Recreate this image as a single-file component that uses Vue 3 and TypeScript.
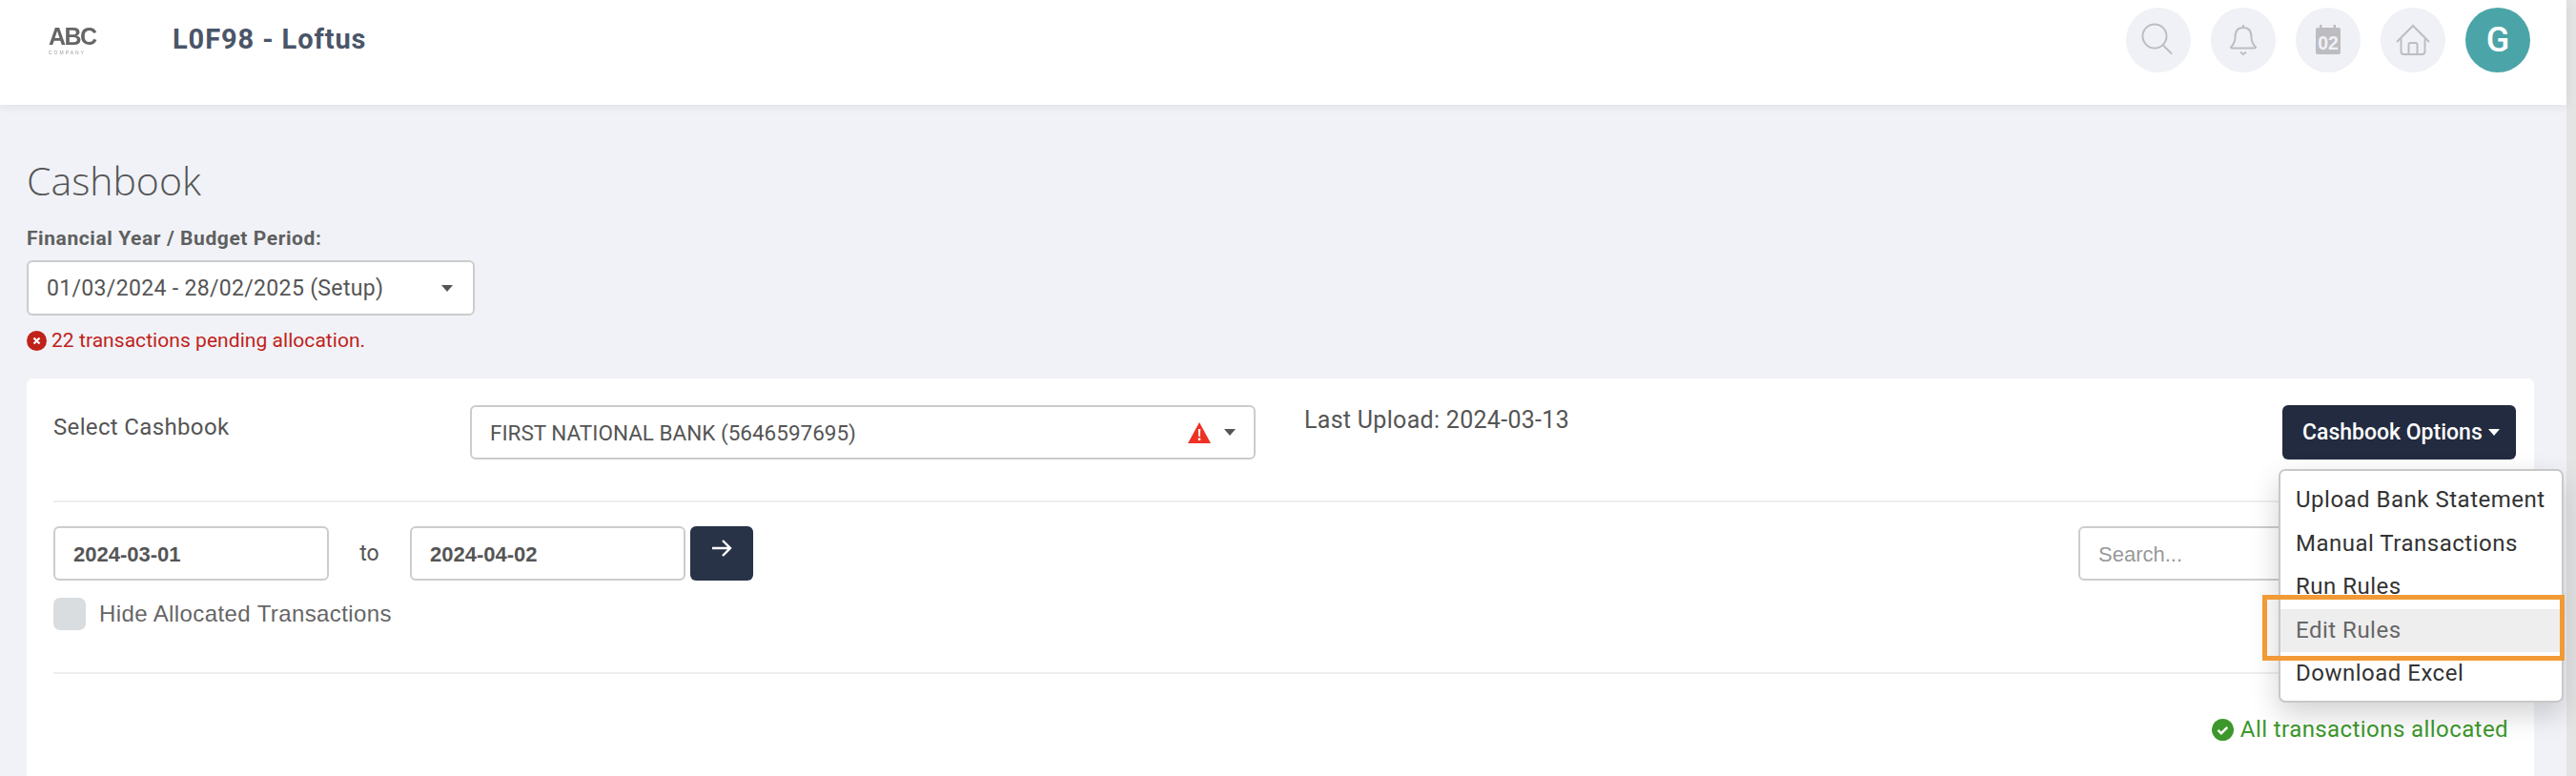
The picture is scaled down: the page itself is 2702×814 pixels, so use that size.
<template>
  <div class="page">
    <div class="main">
      <header class="topbar">
        <div class="logo">
          <span class="logo-abc">ABC</span>
          <span class="logo-sub">COMPANY</span>
        </div>
        <div class="site-name">L0F98 - Loftus</div>
        <div class="top-icons">
          <div class="circle">
            <svg width="68" height="68" viewBox="0 0 68 68" fill="none" stroke="#bdbdc1" stroke-width="2">
              <circle cx="30" cy="30" r="12.500" />
              <path d="M39 39.500 L48 48.500" />
            </svg>
          </div>
          <div class="circle">
            <svg width="68" height="68" viewBox="0 0 68 68" fill="none" stroke="#bdbdc1" stroke-width="2">
              <path d="M34 18v3M34 21c-6 0-8.500 4.500-8.500 10 0 5-1.500 7.500-4.500 10.500 0 .8.500 1 1.200 1h23.600c.7 0 1.200-.2 1.200-1-3-3-4.500-5.500-4.500-10.500 0-5.500-2.500-10-8.500-10z" />
              <path d="M31 46.500l3 2.500 3-2.500" />
            </svg>
          </div>
          <div class="circle">
            <svg width="68" height="68" viewBox="0 0 68 68">
              <path fill="#bdbdc1" d="M25 18h2.500v4H25zM39.500 18H42v4h-2.500zM23 21h22a2 2 0 0 1 2 2v24a2 2 0 0 1-2 2H23a2 2 0 0 1-2-2V23a2 2 0 0 1 2-2z" />
              <text x="34" y="44" text-anchor="middle" class="cal-day">02</text>
            </svg>
          </div>
          <div class="circle">
            <svg width="68" height="68" viewBox="0 0 68 68" fill="none" stroke="#bdbdc1" stroke-width="2">
              <path d="M17 36 L34 19 L51 36" />
              <path d="M21.500 33v13a3 3 0 0 0 3 3h19a3 3 0 0 0 3-3V33" />
              <path d="M29.500 49V39a2 2 0 0 1 2-2h5a2 2 0 0 1 2 2v10" />
            </svg>
          </div>
          <div class="circle avatar">G</div>
        </div>
      </header>

      <main class="content">
        <h1 class="page-title">Cashbook</h1>
        <div class="period-label">Financial Year / Budget Period:</div>
        <div class="select period-select">
          <span>01/03/2024 - 28/02/2025 (Setup)</span>
          <i class="caret"></i>
        </div>
        <div class="pending">
          <svg width="21" height="21" viewBox="0 0 21 21">
            <circle cx="10.500" cy="10.500" r="10.500" fill="#c0221a" />
            <path d="M7.500 7.500l6 6M13.500 7.500l-6 6" stroke="#fff" stroke-width="2.200" />
          </svg>
          <span>{{ pendingCount }} transactions pending allocation.</span>
        </div>

        <section class="card">
          <div class="row-top">
            <div class="select-label">Select Cashbook</div>
            <div class="select bank-select">
              <span>FIRST NATIONAL BANK (5646597695)</span>
              <svg class="warn" width="24" height="22" viewBox="0 0 24 22">
                <path d="M12 0 L24 22 H0 Z" fill="#ee3124" />
                <path d="M10.800 7h2.400l-.4 8h-1.600zM10.800 16.500h2.400v2.500h-2.400z" fill="#fff" />
              </svg>
              <i class="caret"></i>
            </div>
            <div class="last-upload">Last Upload: 2024-03-13</div>
            <div class="dropdown">
              <button class="options-btn">Cashbook Options<i class="caret caret-white"></i></button>
              <ul class="menu">
                <li
                  v-for="item in menuItems"
                  :key="item"
                  :class="{ active: item === 'Edit Rules' }"
                >
                  {{ item }}
                </li>
              </ul>
              <div class="highlight"></div>
            </div>
          </div>

          <hr class="divider" />

          <div class="row-dates">
            <div class="date-input">2024-03-01</div>
            <span class="to">to</span>
            <div class="date-input">2024-04-02</div>
            <button class="go-btn">
              <svg width="22" height="20" viewBox="0 0 22 20" fill="none" stroke="#fff" stroke-width="2.400">
                <path d="M1 10 H20 M12 2 L20 10 L12 18" />
              </svg>
            </button>
            <div class="search-input">Search...</div>
          </div>

          <div class="hide-row">
            <span class="check"></span>
            <span>Hide Allocated Transactions</span>
          </div>

          <hr class="divider second" />

          <div class="allocated">
            <svg width="23" height="23" viewBox="0 0 23 23">
              <circle cx="11.500" cy="11.500" r="11.500" fill="#3c982c" />
              <path d="M6.500 11.800l3.400 3.400 6.400-6.400" fill="none" stroke="#fff" stroke-width="2.400" />
            </svg>
            <span>All transactions allocated</span>
          </div>
        </section>
      </main>
    </div>
    <div class="scrollbar"></div>
  </div>
</template>

<script setup lang="ts">
const pendingCount = 22

const menuItems: string[] = [
  'Upload Bank Statement',
  'Manual Transactions',
  'Run Rules',
  'Edit Rules',
  'Download Excel',
]
</script>

<style>
html,
body {
  margin: 0;
  overflow: hidden;
}
</style>

<style scoped>
.page {
  display: flex;
  height: 814px;
  overflow: hidden;
  font-family: Roboto, 'Liberation Sans', sans-serif;
  color: #555;
}
.main {
  flex: 1;
  min-width: 0;
  background: #f0f2f7;
}
.scrollbar {
  width: 10px;
  background: #e4e4e4;
}

/* top bar */
.topbar {
  display: flex;
  align-items: flex-start;
  height: 110px;
  box-sizing: border-box;
  background: #fff;
  box-shadow: 0 2px 10px rgba(0, 0, 0, 0.08);
  position: relative;
}
.logo {
  width: 130px;
  padding: 26px 0 0 51px;
  display: flex;
  flex-direction: column;
  color: #666;
  filter: blur(0.7px);
}
.logo-abc {
  font: 700 25px/25px 'Liberation Sans', sans-serif;
  letter-spacing: -1.500px;
}
.logo-sub {
  font: 400 5px/8px 'Liberation Sans', sans-serif;
  letter-spacing: 2px;
  color: #999;
}
.site-name {
  margin-top: 25px;
  font-size: 29px;
  line-height: 32px;
  font-weight: 700;
  letter-spacing: 0.9px;
  color: #4a5568;
}
.top-icons {
  margin-left: auto;
  margin-right: 38px;
  margin-top: 8px;
  display: flex;
  gap: 21px;
}
.circle {
  width: 68px;
  height: 68px;
  border-radius: 50%;
  background: #f0f1f6;
  display: flex;
  align-items: center;
  justify-content: center;
}
.cal-day {
  font: 700 19.500px 'Liberation Sans', sans-serif;
  fill: #f0f1f6;
}
.avatar {
  background: #4ba5a8;
  color: #fff;
  font-size: 36px;
  font-weight: 500;
}

/* heading area */
.content {
  padding: 54px 34px 0 28px;
}
.page-title {
  margin: 0;
  font: 300 41px/50px 'Open Sans', sans-serif;
  color: #555;
}
.period-label {
  margin-top: 24px;
  font-size: 21px;
  line-height: 24px;
  font-weight: 700;
  letter-spacing: 0.58px;
  color: #5f5f5f;
}
.select {
  display: flex;
  align-items: center;
  box-sizing: border-box;
  background: #fff;
  border: 2px solid #ccc;
  border-radius: 6px;
}
.period-select {
  margin-top: 11px;
  width: 470px;
  height: 58px;
  padding: 0 21px 0 19px;
  font-size: 23px;
  letter-spacing: 0.33px;
  justify-content: space-between;
}
.caret {
  display: inline-block;
  width: 0;
  height: 0;
  border-left: 6px solid transparent;
  border-right: 6px solid transparent;
  border-top: 7px solid #555;
}
.pending {
  margin-top: 14px;
  display: flex;
  align-items: center;
  gap: 5px;
  font-size: 21px;
  letter-spacing: 0.05px;
  line-height: 24px;
  color: #c0221a;
}

/* main card */
.card {
  margin: 28px 0 0;
  padding: 28px 27px 0 28px;
  height: 417px;
  background: #fff;
  border-radius: 6px 6px 0 0;
}
.row-top {
  display: flex;
  align-items: flex-start;
  margin-right: -8px;
}
.select-label {
  width: 437px;
  font-size: 24px;
  letter-spacing: 0.35px;
  line-height: 46px;
}
.bank-select {
  width: 824px;
  height: 57px;
  padding: 0 19px;
  font-size: 22.500px;
}
.bank-select span {
  flex: 1;
}
.warn {
  margin-right: 14px;
}
.last-upload {
  margin-left: 51px;
  font-size: 25px;
  letter-spacing: 0.3px;
  line-height: 32px;
}
.dropdown {
  position: relative;
  margin-left: auto;
}
.options-btn {
  display: flex;
  align-items: center;
  width: 245px;
  height: 57px;
  padding: 0 0 0 21px;
  border: 0;
  border-radius: 6px;
  background: #222b40;
  color: #fff;
  font: 500 23px Roboto, sans-serif;
}
.caret-white {
  margin-left: 6px;
  border-top-color: #fff;
}
.menu {
  position: absolute;
  top: 67px;
  left: -4px;
  z-index: 5;
  box-sizing: border-box;
  width: 299px;
  height: 245px;
  margin: 0;
  padding: 8px 0;
  list-style: none;
  background: #fff;
  border: 2px solid #c8c8c8;
  border-radius: 7px;
  box-shadow: 0 12px 30px rgba(0, 0, 0, 0.18);
}
.menu li {
  height: 45.500px;
  line-height: 45.500px;
  padding-left: 16px;
  font-size: 24px;
  letter-spacing: 0.5px;
  color: #333;
  white-space: nowrap;
}
.menu li.active {
  background: #eee;
  color: #666;
}
.highlight {
  position: absolute;
  top: 199px;
  left: -21px;
  z-index: 6;
  box-sizing: border-box;
  width: 317px;
  height: 69px;
  border: 5px solid #f29a36;
}
.divider {
  margin: 43px 0 0;
  border: 0;
  height: 2px;
  background: #eee;
}
.divider.second {
  margin-top: 44px;
}
.row-dates {
  display: flex;
  align-items: center;
  margin-top: 25px;
}
.date-input,
.search-input {
  box-sizing: border-box;
  height: 57px;
  line-height: 55px;
  padding-left: 19px;
  background: #fff;
  border: 2px solid #ccc;
  border-radius: 6px;
  font-family: 'Liberation Sans', sans-serif;
  font-size: 22px;
}
.date-input {
  width: 289px;
  font-weight: 700;
}
.to {
  width: 85px;
  text-align: center;
  font-size: 23px;
}
.go-btn {
  margin-left: 5px;
  width: 66px;
  height: 57px;
  border: 0;
  border-radius: 6px;
  background: #283347;
  padding: 0 0 8px;
}
.search-input {
  margin-left: auto;
  width: 451px;
  color: #999;
}
.hide-row {
  display: flex;
  align-items: center;
  gap: 14px;
  margin-top: 18px;
  font: 24px 'Liberation Sans', sans-serif;
  letter-spacing: 0.4px;
  color: #666;
}
.check {
  width: 34px;
  height: 34px;
  border-radius: 7px;
  background: #d9dde0;
}
.allocated {
  margin-top: 46px;
  display: flex;
  justify-content: flex-end;
  align-items: center;
  gap: 7px;
  font-size: 24px;
  letter-spacing: 0.42px;
  line-height: 24px;
  color: #3c982c;
}
</style>
